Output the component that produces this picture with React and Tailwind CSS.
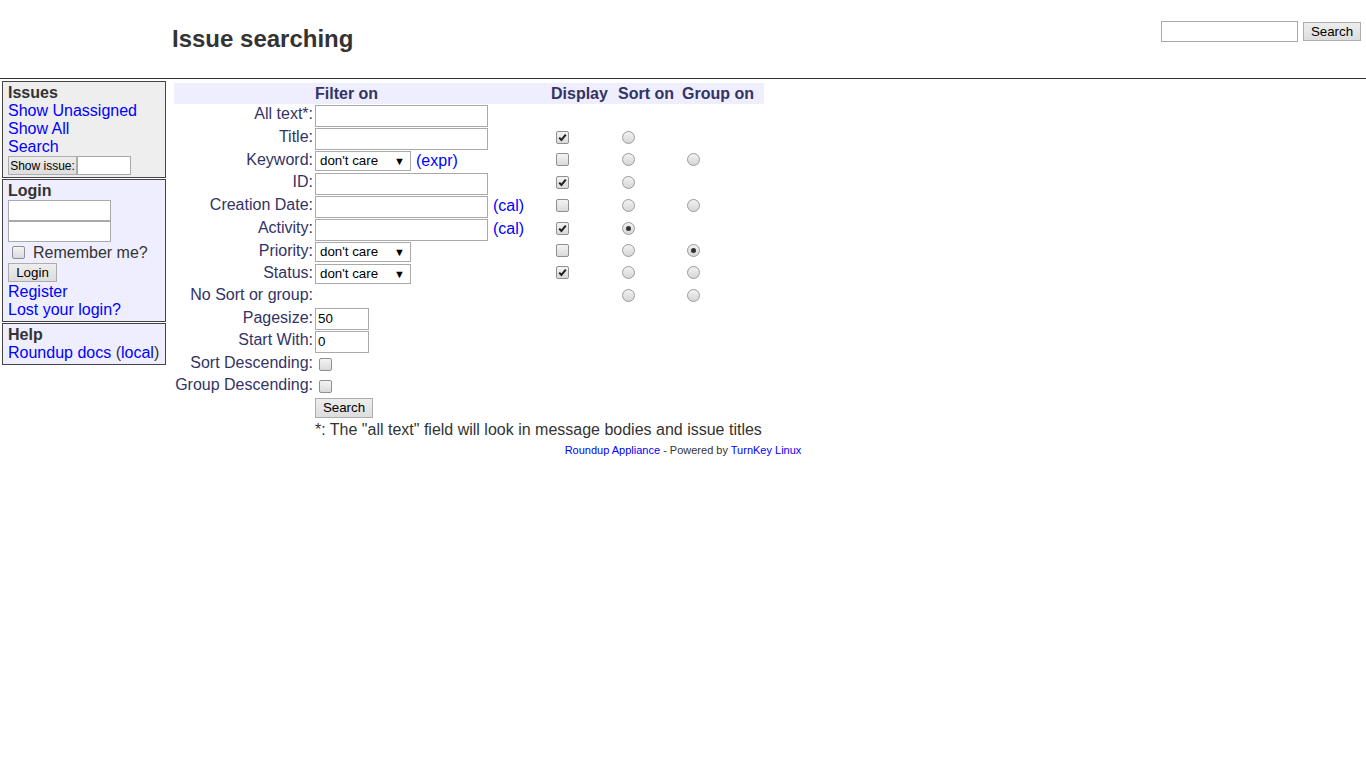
import React from 'react';

const Check = ({ checked, className = '' }) => (
  <span className={`inline-flex w-[13px] h-[13px] shrink-0 items-center justify-center rounded-[2px] border border-[#8f8f8f] bg-linear-to-b from-[#f4f4f4] to-[#dadada] ${className}`}>
    {checked && (
      <svg width="9" height="9" viewBox="0 0 9 9">
        <path d="M1.2 4.6 L3.4 7 L7.8 1.6" fill="none" stroke="#222" strokeWidth="2" />
      </svg>
    )}
  </span>
);

const Radio = ({ checked, className = '' }) => (
  <span className={`inline-flex w-[13px] h-[13px] shrink-0 items-center justify-center rounded-full border border-[#9a9a9a] bg-linear-to-b from-[#f2f2f2] to-[#d6d6d6] ${className}`}>
    {checked && <span className="w-[5px] h-[5px] rounded-full bg-[#333]" />}
  </span>
);

const TextInput = ({ w = 'w-[173px]', value = '' }) => (
  <div className={`${w} h-[22px] border border-[#a9a9a9] bg-white flex items-center pl-[2px] text-[13.33px] text-black`}>
    {value}
  </div>
);

const Select = () => (
  <div className="w-[96px] h-[20px] border border-[#a9a9a9] bg-white flex items-center justify-between pl-[4px] pr-[5px] text-[13.33px] text-black">
    <span>don't care</span>
    <span className="text-[11px]">▼</span>
  </div>
);

const Btn = ({ children, size = 'text-[13.33px]', className = '' }) => (
  <button className={`border border-[#adadad] bg-linear-to-b from-[#ededed] to-[#dddddd] leading-none text-black whitespace-nowrap ${size} ${className}`}>
    {children}
  </button>
);

const A = ({ children }) => <a className="text-[#0000ff]">{children}</a>;

const Row = ({ h, label, filter, display, sort, group }) => (
  <div className={`grid grid-cols-[141px_236px_67px_64px_82px] items-center ${h}`}>
    <div className="text-right pr-[2px] mb-[3px] text-[#333366] whitespace-nowrap">{label}</div>
    <div className="flex items-center">{filter}</div>
    <div className="flex items-center">{display !== undefined && <Check checked={display} className="ml-[5px] mb-[3px]" />}</div>
    <div className="flex items-center">{sort !== undefined && <Radio checked={sort} className="ml-[4px] mb-[3px]" />}</div>
    <div className="flex items-center">{group !== undefined && <Radio checked={group} className="ml-[5px] mb-[3px]" />}</div>
  </div>
);

const Box = ({ tone, children }) => (
  <div className={`border border-[#444] px-[5px] py-[2px] leading-[18px] ${tone}`}>{children}</div>
);

export default function App() {
  return (
    <div className="min-h-[768px] bg-white text-[#333] text-[16px] font-['Liberation_Sans',Arial,sans-serif]">
      <div className="h-[78px] flex justify-between">
        <h1 className="ml-[172px] mt-[25px] text-[24px] font-bold leading-[27px]">Issue searching</h1>
        <div className="flex items-start gap-[5px] mt-[21px] mr-[5px]">
          <div className="w-[137px] h-[21px] border border-[#a9a9a9] bg-white" />
          <Btn className="w-[58px] h-[19px] mt-[1px]">Search</Btn>
        </div>
      </div>
      <div className="border-t border-[#333]" />

      <div className="flex">
        <aside className="w-[164px] ml-[2px] mt-[2px] flex flex-col gap-[1px]">
          <Box tone="bg-[#eeeeee]">
            <div className="font-bold">Issues</div>
            <div><A>Show Unassigned</A></div>
            <div><A>Show All</A></div>
            <div><A>Search</A></div>
            <div className="flex h-[19px] items-center">
              <Btn size="text-[12px]" className="w-[69px] h-[19px] px-0">Show issue:</Btn>
              <div className="w-[54px] h-[19px] border border-[#a9a9a9] bg-white" />
            </div>
          </Box>
          <Box tone="bg-[#eeeeff]">
            <div className="font-bold">Login</div>
            <div className="w-[103px] h-[21px] border border-[#a9a9a9] bg-white" />
            <div className="w-[103px] h-[21px] border border-[#a9a9a9] bg-white" />
            <div className="flex items-center h-[21px]">
              <Check className="ml-[4px]" />
              <span className="ml-[8px]">Remember me?</span>
            </div>
            <Btn className="w-[49px] h-[19px]">Login</Btn>
            <div className="mt-[1px]"><A>Register</A></div>
            <div><A>Lost your login?</A></div>
          </Box>
          <Box tone="bg-[#eeeeff]">
            <div className="font-bold">Help</div>
            <div><A>Roundup docs</A> (<A>local</A>)</div>
          </Box>
        </aside>

        <main className="ml-[8px] mt-[4px] leading-[18px]">
          <div className="grid grid-cols-[141px_236px_67px_64px_82px] items-center h-[21px] bg-[#eeeeff] font-bold text-[#333366]">
            <div />
            <div>Filter on</div>
            <div>Display</div>
            <div>Sort on</div>
            <div>Group on</div>
          </div>
          <Row h="h-[23px]" label="All text*:" filter={<TextInput />} />
          <Row h="h-[23px]" label="Title:" filter={<TextInput />} display={true} sort={false} />
          <Row h="h-[22px]" label="Keyword:" filter={<><Select /><span className="ml-[5px]"><A>(expr)</A></span></>} display={false} sort={false} group={false} />
          <Row h="h-[23px]" label="ID:" filter={<TextInput />} display={true} sort={false} />
          <Row h="h-[23px]" label="Creation Date:" filter={<><TextInput /><span className="ml-[5px] mb-[2px]"><A>(cal)</A></span></>} display={false} sort={false} group={false} />
          <Row h="h-[23px]" label="Activity:" filter={<><TextInput /><span className="ml-[5px] mb-[2px]"><A>(cal)</A></span></>} display={true} sort={true} />
          <Row h="h-[22px]" label="Priority:" filter={<Select />} display={false} sort={false} group={true} />
          <Row h="h-[22px]" label="Status:" filter={<Select />} display={true} sort={false} group={false} />
          <Row h="h-[23px]" label="No Sort or group:" sort={false} group={false} />
          <Row h="h-[22px]" label="Pagesize:" filter={<TextInput w="w-[54px]" value="50" />} />
          <Row h="h-[23px]" label="Start With:" filter={<TextInput w="w-[54px]" value="0" />} />
          <Row h="h-[22px]" label="Sort Descending:" filter={<Check className="ml-[4px]" />} />
          <Row h="h-[22px]" label="Group Descending:" filter={<Check className="ml-[4px]" />} />
          <div className="grid grid-cols-[141px_449px] h-[22px] items-center">
            <div />
            <div><Btn className="w-[58px] h-[20px]">Search</Btn></div>
          </div>
          <div className="grid grid-cols-[141px_449px] mt-[2px]">
            <div />
            <div className="whitespace-nowrap">*: The "all text" field will look in message bodies and issue titles</div>
          </div>
        </main>
      </div>

      <div className="text-center text-[11px] leading-[13px] mt-[5px]">
        <A>Roundup Appliance</A> - Powered by <A>TurnKey Linux</A>
      </div>
    </div>
  );
}
